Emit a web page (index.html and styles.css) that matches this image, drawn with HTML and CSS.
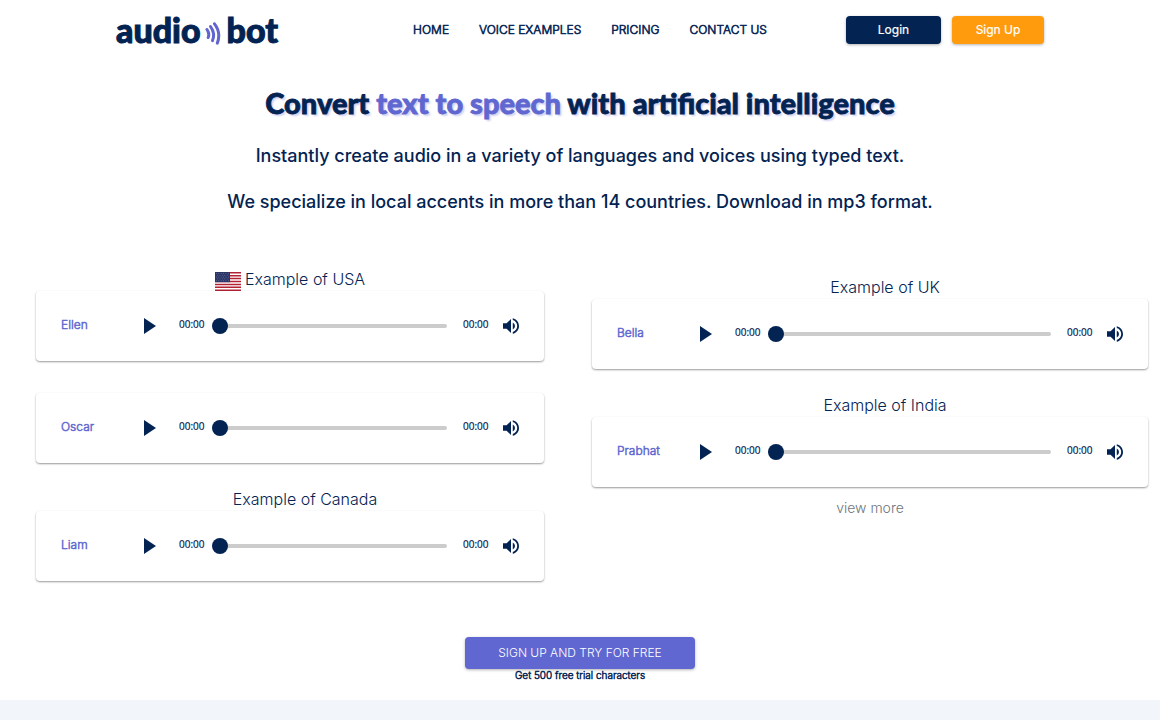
FILE: index.html
```html
<!DOCTYPE html>
<html lang="en">
<head>
    <meta charset="UTF-8">
    <meta name="viewport" content="width=device-width, initial-scale=1.0">
    <title>audio bot</title>
    <link rel="stylesheet" href="styles.css">
</head>
<body>
    <svg class="sprite" aria-hidden="true">
        <symbol id="icon-play" viewBox="0 0 12 16"><path d="M0 0v16l12-8z"/></symbol>
        <symbol id="icon-volume" viewBox="3 3 18 18"><path d="M3 9v6h4l5 5V4L7 9H3zm13.5 3A4.5 4.5 0 0 0 14 7.97v8.05A4.48 4.48 0 0 0 16.5 12zM14 3.23v2.06c2.89.86 5 3.54 5 6.71s-2.11 5.85-5 6.71v2.06c4.01-.91 7-4.49 7-8.77s-2.99-7.86-7-8.77z"/></symbol>
    </svg>

    <header class="header">
        <a class="logo" href="#">
            <span>audio</span>
            <svg class="logo-waves" viewBox="0 0 16 23" aria-hidden="true">
                <path d="M2 7.500Q4.800 11.500 3.200 15.500"/>
                <path d="M5.500 4.500Q10.500 11.500 7.500 18.700"/>
                <path d="M9.500 1.800Q16.300 10.500 12.300 21.200"/>
            </svg>
            <span>bot</span>
        </a>
        <nav class="nav">
            <a href="#">HOME</a>
            <a href="#">VOICE EXAMPLES</a>
            <a href="#">PRICING</a>
            <a href="#">CONTACT US</a>
        </nav>
        <div class="actions">
            <button type="button" class="btn btn-login">Login</button>
            <button type="button" class="btn btn-signup">Sign Up</button>
        </div>
    </header>

    <main>
        <section class="hero">
            <h1>Convert <span>text to speech</span> with artificial intelligence</h1>
            <p>Instantly create audio in a variety of languages and voices using typed text.</p>
            <p>We specialize in local accents in more than 14 countries. Download in mp3 format.</p>
        </section>

        <section class="examples">
            <div class="column column-inset">
                <h2 class="country">
                    <svg class="flag" viewBox="0 0 26 19" aria-hidden="true">
                        <path fill="#fff" d="M0 0h26v19H0z"/>
                        <path stroke="#b22234" stroke-width="1.460" d="M0 .73h26M0 3.650h26M0 6.580h26M0 9.500h26M0 12.420h26M0 15.350h26M0 18.270h26"/>
                        <path fill="#2b3467" d="M0 0h15v10.200H0z"/>
                        <path stroke="#8d93b5" stroke-width=".7" stroke-dasharray=".7 1.700" d="M1 1.500h13.500M2.200 3.300h12M1 5.100h13.500M2.200 6.900h12M1 8.700h13.500"/>
                    </svg>
                    Example of USA
                </h2>
                <div class="player">
                    <label class="voice" for="ellen">Ellen</label>
                    <button type="button" class="play" aria-label="Play"><svg><use href="#icon-play"/></svg></button>
                    <span class="time">00:00</span>
                    <input type="range" id="ellen" class="seek" value="0">
                    <span class="time">00:00</span>
                    <button type="button" class="volume" aria-label="Volume"><svg><use href="#icon-volume"/></svg></button>
                </div>
                <div class="player player-next">
                    <label class="voice" for="oscar">Oscar</label>
                    <button type="button" class="play" aria-label="Play"><svg><use href="#icon-play"/></svg></button>
                    <span class="time">00:00</span>
                    <input type="range" id="oscar" class="seek" value="0">
                    <span class="time">00:00</span>
                    <button type="button" class="volume" aria-label="Volume"><svg><use href="#icon-volume"/></svg></button>
                </div>
                <h2 class="country"><span class="flag"></span> Example of Canada</h2>
                <div class="player">
                    <label class="voice" for="liam">Liam</label>
                    <button type="button" class="play" aria-label="Play"><svg><use href="#icon-play"/></svg></button>
                    <span class="time">00:00</span>
                    <input type="range" id="liam" class="seek" value="0">
                    <span class="time">00:00</span>
                    <button type="button" class="volume" aria-label="Volume"><svg><use href="#icon-volume"/></svg></button>
                </div>
            </div>

            <div class="column column-low">
                <h2 class="country"><span class="flag"></span> Example of UK</h2>
                <div class="player">
                    <label class="voice" for="bella">Bella</label>
                    <button type="button" class="play" aria-label="Play"><svg><use href="#icon-play"/></svg></button>
                    <span class="time">00:00</span>
                    <input type="range" id="bella" class="seek" value="0">
                    <span class="time">00:00</span>
                    <button type="button" class="volume" aria-label="Volume"><svg><use href="#icon-volume"/></svg></button>
                </div>
                <h2 class="country"><span class="flag"></span> Example of India</h2>
                <div class="player">
                    <label class="voice" for="prabhat">Prabhat</label>
                    <button type="button" class="play" aria-label="Play"><svg><use href="#icon-play"/></svg></button>
                    <span class="time">00:00</span>
                    <input type="range" id="prabhat" class="seek" value="0">
                    <span class="time">00:00</span>
                    <button type="button" class="volume" aria-label="Volume"><svg><use href="#icon-volume"/></svg></button>
                </div>
                <a class="view-more" href="#">view more</a>
            </div>
        </section>

        <section class="trial">
            <button type="button" class="btn btn-trial">SIGN UP AND TRY FOR FREE</button>
            <p>Get 500 free trial characters</p>
        </section>
    </main>

    <div class="next-section"></div>
</body>
</html>
```
FILE: styles.css
```css
* {
    box-sizing: border-box;
}
body {
    margin: 0;
    display: flex;
    flex-direction: column;
    min-height: 100vh;
    font-family: Inter, sans-serif;
    font-weight: 300;
    color: #032353;
    background-color: #fff;
}
h1, h2, p {
    margin: 0;
}
a {
    color: inherit;
    text-decoration: none;
}
button {
    padding: 0;
    border: none;
    background: none;
    font-family: inherit;
    color: inherit;
    cursor: pointer;
}
.sprite {
    display: none;
}

/* header */
.header {
    display: flex;
    align-items: center;
    justify-content: space-between;
    height: 60px;
    padding: 0 10%;
}
.logo {
    display: flex;
    align-items: center;
    min-width: 218px;
    font-family: Lato, sans-serif;
    font-size: 34px;
    font-weight: 900;
    line-height: 40px;
    -webkit-text-stroke: 1px;
}
.logo-waves {
    width: 16px;
    height: 23px;
    margin: 6px 6px 0 4px;
    fill: none;
    stroke: #6264cf;
    stroke-width: 3;
    stroke-linecap: round;
}
.nav {
    display: flex;
    gap: 30px;
    padding-bottom: 2px;
    font-size: 12px;
    -webkit-text-stroke: 0.6px;
}
.actions {
    display: flex;
    gap: 11px;
}
.btn {
    padding-bottom: 1px;
    border-radius: 4px;
    color: #fff;
    font-size: 12px;
    box-shadow: 0 1px 3px rgba(0, 0, 0, 0.3);
}
.btn-login {
    width: 95px;
    height: 28px;
    background-color: #032353;
    -webkit-text-stroke: 0.2px;
}
.btn-signup {
    width: 92px;
    height: 28px;
    background-color: #ff9b0c;
    -webkit-text-stroke: 0.2px;
}

/* hero */
.hero {
    padding-top: 23px;
    text-align: center;
}
.hero h1 {
    font-family: Lato, sans-serif;
    font-size: 29px;
    font-weight: 900;
    line-height: 40px;
    text-shadow: 2px 2px 2px rgba(98, 100, 207, 0.3);
    -webkit-text-stroke: 0.8px;
}
.hero h1 span {
    color: #6067d0;
}
.hero p {
    margin-top: 20px;
    font-size: 18px;
    font-weight: 500;
    line-height: 26px;
}

/* voice examples */
.examples {
    display: grid;
    grid-template-columns: 1fr 1fr;
    gap: 24px;
    padding: 52px 12px 0;
}
.column {
    display: flex;
    flex-direction: column;
}
.column-inset {
    padding: 0 24px;
}
.column-low {
    padding-top: 8px;
}
.country {
    display: flex;
    justify-content: center;
    gap: 4px;
    font-size: 16px;
    font-weight: 300;
    line-height: 24px;
}
.flag {
    width: 26px;
    height: 19px;
    margin-top: 5px;
}
.player {
    display: flex;
    align-items: center;
    height: 70px;
    padding: 0 25px;
    border-radius: 4px;
    background-color: #fff;
    box-shadow: 0 1px 2px rgba(0, 0, 0, 0.4);
}
.player-next {
    margin-top: 32px;
}
.player + .country {
    margin-top: 24px;
}
.voice {
    width: 83px;
    padding-bottom: 4px;
    color: #6067d0;
    font-size: 12px;
    -webkit-text-stroke: 0.5px;
}
.play {
    width: 12px;
    height: 16px;
    margin-right: 23px;
}
.play svg, .volume svg {
    display: block;
    width: 100%;
    height: 100%;
    fill: #032353;
}
.time {
    width: 25px;
    padding-bottom: 4px;
    font-family: "Open Sans", sans-serif;
    font-size: 10px;
    font-weight: 400;
    -webkit-text-stroke: 0.2px;
}
.seek {
    flex: 1;
    min-width: 0;
    height: 16px;
    margin: 0 16px 0 8px;
    appearance: none;
    background: none;
}
.seek::-webkit-slider-runnable-track {
    height: 4px;
    border-radius: 2px;
    background-color: #ccc;
}
.seek::-webkit-slider-thumb {
    appearance: none;
    width: 16px;
    height: 16px;
    margin-top: -6px;
    border-radius: 50%;
    background-color: #032353;
}
.volume {
    width: 16px;
    height: 16px;
    margin-left: 15px;
}
.view-more {
    margin-top: 9px;
    color: #6c757d;
    font-size: 14px;
    line-height: 24px;
    text-align: center;
}

/* free trial */
.trial {
    padding: 56px 0 19px;
    text-align: center;
}
.btn-trial {
    display: block;
    width: 230px;
    height: 32px;
    margin: 0 auto;
    background-color: #6067d0;
    font-weight: 300;
}
.trial p {
    font-size: 10px;
    line-height: 12px;
    -webkit-text-stroke: 0.5px;
}
.next-section {
    flex: 1;
    background-color: #f2f6fb;
}
```
